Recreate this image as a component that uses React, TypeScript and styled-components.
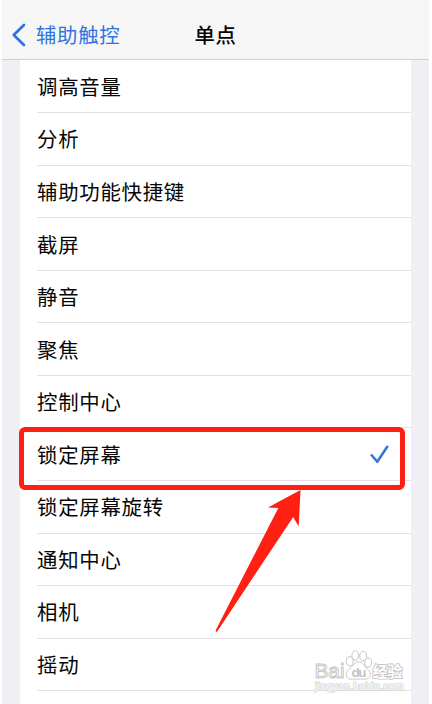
import React from "react";
import styled, { createGlobalStyle } from "styled-components";

const GlobalStyle = createGlobalStyle`
  * { box-sizing: border-box; }
  body { margin: 0; background: #fff; overflow: hidden; }
`;

const Screen = styled.main`
  position: relative;
  display: flex;
  flex-direction: column;
  width: 427px;
  height: 704px;
  margin-left: 2px;
  background: #f0eff5;
  overflow: hidden;
  font-family: "Noto Sans CJK SC", "Noto Sans", sans-serif;
  color: #050505;
`;

const NavBar = styled.header`
  display: grid;
  grid-template-columns: 1fr auto 1fr;
  align-items: center;
  flex: none;
  height: 60px;
  padding: 9px 0 0 9px;
  background: #f6f6f6;
  border-bottom: 1px solid #cfcfd2;
`;

const BackButton = styled.button`
  display: flex;
  align-items: center;
  gap: 10px;
  padding: 0;
  border: 0;
  background: none;
  color: #2f73e0;
  font: inherit;
  font-size: 20.4px;
  line-height: 30px;
  letter-spacing: 0.7px;
  white-space: nowrap;

  svg {
    position: relative;
    top: 1px;
  }
`;

const Title = styled.h1`
  margin: 0;
  padding-right: 9px;
  font-size: 20.4px;
  font-weight: 500;
  line-height: 30px;
  letter-spacing: 0.6px;
`;

const List = styled.ul`
  flex: 1;
  margin: 0 18px 0 18px;
  padding: 0.6px 0 0 17px;
  background: #fff;
  list-style: none;
`;

const Row = styled.li`
  display: flex;
  align-items: center;
  justify-content: space-between;
  height: 52.55px;
  padding: 0 22px 1px 0;
  border-bottom: 1px solid #e2e2e4;
  font-size: 20.4px;
  line-height: 30px;
  letter-spacing: 0.75px;

  svg {
    position: relative;
    top: 1px;
  }
`;

const Highlight = styled.div`
  position: absolute;
  left: 17px;
  top: 427px;
  width: 386px;
  height: 63px;
  border: 5px solid #ff2014;
  border-radius: 6px;
`;

const Arrow = styled.svg`
  position: absolute;
  left: 198px;
  top: 480px;
`;

const Watermark = styled.svg`
  position: absolute;
  left: 308px;
  top: 644px;
`;

const actions = [
  "调高音量", "分析", "辅助功能快捷键", "截屏", "静音", "聚焦",
  "控制中心", "锁定屏幕", "锁定屏幕旋转", "通知中心", "相机", "摇动",
];
const selected = "锁定屏幕";

const BackIcon = () => (
  <svg width="15" height="24" viewBox="0 0 15 24" fill="none" stroke="#2f73e0" strokeWidth="2.7" strokeLinecap="round" strokeLinejoin="round">
    <path d="M13 2 2.7 12 13 22" />
  </svg>
);

const CheckIcon = () => (
  <svg width="19" height="19" viewBox="0 0 19 19" fill="none" stroke="#2f73e0" strokeWidth="2.5" strokeLinecap="round" strokeLinejoin="round">
    <path d="M1.7 10.2 7.3 16.7 17.2 1.8" />
  </svg>
);

export default function App() {
  return (
    <>
      <GlobalStyle />
      <Screen>
        <NavBar>
          <BackButton><BackIcon />辅助触控</BackButton>
          <Title>单点</Title>
        </NavBar>
        <List>
          {actions.map((name) => (
            <Row key={name}>
              {name}
              {name === selected && <CheckIcon />}
            </Row>
          ))}
        </List>
        <Highlight />
        <Arrow width="120" height="160" viewBox="0 0 120 160">
          <path d="M100.5 10 68 27.5 78.3 28 15.7 150.3Q15.5 152.5 17.2 151.5L93.2 37 98.7 46.5Z" fill="#ff2014" />
        </Arrow>
        <Watermark width="104" height="52" viewBox="0 0 104 52" fill="#fff" stroke="#c6c6c6" strokeWidth="1" strokeLinejoin="round">
          <text x="4.500" y="34" fontSize="21" strokeWidth="1" fontFamily="Liberation Sans, sans-serif" textLength="30" lengthAdjust="spacingAndGlyphs">Bai</text>
          <ellipse cx="39.700" cy="17.300" rx="3.400" ry="4.600" />
          <ellipse cx="45.300" cy="11.500" rx="3.400" ry="4.800" />
          <ellipse cx="53.200" cy="12" rx="3.500" ry="4.800" />
          <ellipse cx="58.200" cy="18.500" rx="3.400" ry="4.600" />
          <path d="M48.500 18C44 18 43.500 22 40 24.500C36.500 27 35.500 30 37 33C38.500 36 43 35 48.500 35C54 35 58.500 36 60 32.500C61 29 59.500 27 56.500 24C54 21 53 18 48.500 18Z" />
          <text x="41.500" y="33" fontSize="13.500" fill="#c4c4c4" stroke="none" fontWeight="bold" fontFamily="Liberation Sans, sans-serif" textLength="15">du</text>
          <text x="62.500" y="33" fontSize="15" fontWeight="bold" strokeWidth="1.800" paintOrder="stroke" fontFamily="Noto Sans CJK SC, sans-serif">经验</text>
          <text x="5" y="45.500" fontSize="10" strokeWidth="1.600" stroke="#d8d8d8" paintOrder="stroke" fontFamily="Liberation Sans, sans-serif" textLength="88">jingyan.baidu.com</text>
        </Watermark>
      </Screen>
    </>
  );
}
